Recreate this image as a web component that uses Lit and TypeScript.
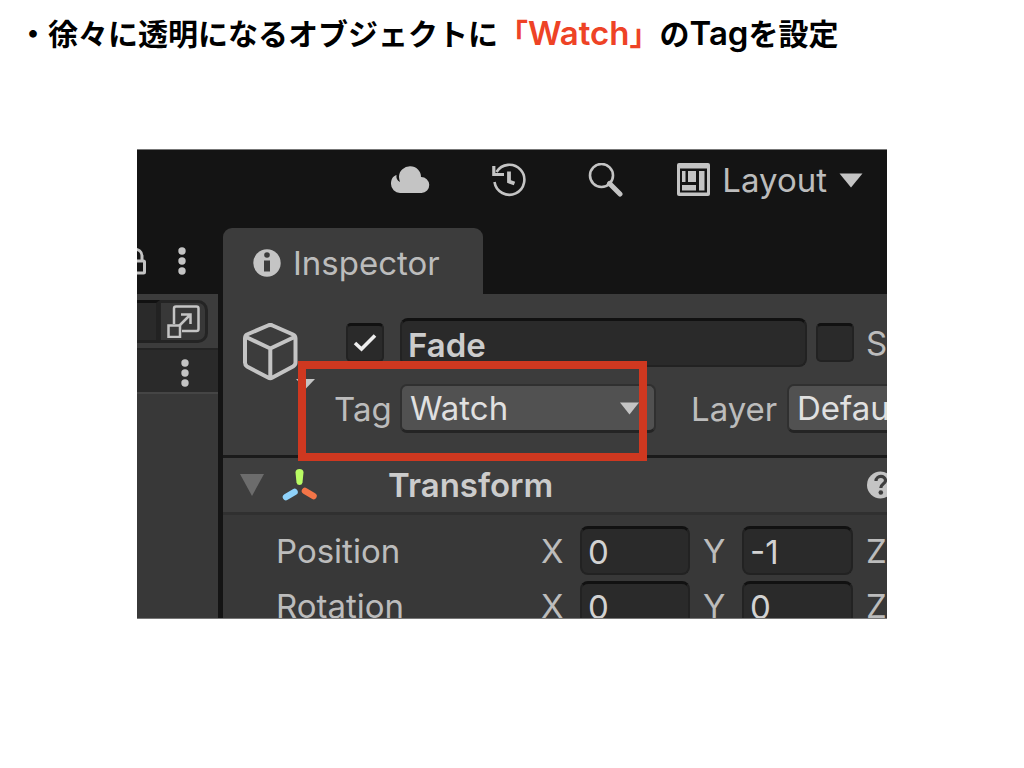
import { LitElement, html, css } from "lit";
import { customElement } from "lit/decorators.js";

const rows = [
  { label: "Position", x: "0", y: "-1", z: "0" },
  { label: "Rotation", x: "0", y: "0", z: "0" },
];

@customElement("unity-editor")
export class UnityEditor extends LitElement {
  static styles = css`
    :host {
      display: block;
      box-sizing: border-box;
      overflow: hidden;
      background: #141414;
      border-top: 1px solid #777;
      border-bottom: 1px solid #777;
      color: #bcbcbc;
      font: 33px/40px Inter, "Liberation Sans", sans-serif;
      font-optical-sizing: none;
    }
    * { box-sizing: border-box; font-optical-sizing: none; }
    svg { display: block; flex: none; }
    button {
      display: flex;
      align-items: center;
      padding: 0;
      border: 0;
      background: none;
      color: inherit;
      font: inherit;
      font-optical-sizing: none;
    }
    .toolbar {
      display: flex;
      justify-content: flex-end;
      align-items: center;
      height: 60px;
      margin-bottom: 18px;
      padding-right: 24px;
    }
    .toolbar button { margin-left: 62px; }
    .toolbar .layout { gap: 12px; margin-left: 54px; }
    .main {
      display: grid;
      grid-template-columns: 81px minmax(0, 1fr);
      column-gap: 5px;
    }
    .side {
      display: flex;
      flex-direction: column;
      overflow: hidden;
      background: #383838;
    }
    .side-tab {
      display: flex;
      justify-content: flex-end;
      align-items: center;
      gap: 32px;
      height: 66px;
      padding-right: 32px;
      background: #141414;
    }
    .side-search {
      display: flex;
      height: 56px;
      padding: 6px 10px 5px 0;
      background: #3c3c3c;
      border-bottom: 2px solid #242424;
    }
    .side-search input {
      width: 23px;
      border: 0;
      border-top: 3px solid #111;
      border-right: 4px solid #222;
      border-bottom: 3px solid #222;
      background: #2a2a2a;
    }
    .side-search button {
      flex: 1;
      justify-content: center;
      border: 3px solid #242424;
      border-left-width: 1px;
      border-radius: 0 10px 10px 0;
      background: #383838;
    }
    .side-row {
      display: flex;
      justify-content: flex-end;
      align-items: center;
      height: 44px;
      padding: 4px 29px 0 0;
      background: #2a2a2a;
      border-bottom: 2px solid #454545;
    }
    .inspector { overflow: hidden; }
    .tab {
      display: inline-flex;
      align-items: center;
      gap: 12px;
      height: 66px;
      width: 260px;
      padding: 4px 30px 0;
      border-radius: 9px 9px 0 0;
      background: #3c3c3c;
      vertical-align: top;
    }
    .header {
      position: relative;
      display: flex;
      gap: 18px;
      height: 164px;
      padding: 24px 0 0 20px;
      background: #3c3c3c;
      border-bottom: 3px solid #1a1a1a;
    }
    .cube { align-self: flex-start; margin-top: 5px; }
    .fields {
      display: flex;
      flex-direction: column;
      gap: 17px;
      min-width: 0;
    }
    .line { display: flex; align-items: center; height: 49px; }
    .line.name { padding-left: 12px; }
    .line label { flex: none; }
    .tag { width: 66px; }
    .layer { width: 96px; margin-left: 35px; }
    .static { margin-left: 12px; }
    .box {
      display: grid;
      flex: none;
      width: 38px;
      height: 39px;
    }
    .box > * { grid-area: 1 / 1; place-self: center; }
    .box svg { pointer-events: none; }
    .box input {
      appearance: none;
      width: 100%;
      height: 100%;
      margin: 0;
      border: 2px solid #222;
      border-top: 3px solid #111;
      border-radius: 5px;
      background: #2a2a2a;
    }
    .text {
      flex: none;
      min-width: 0;
      height: 49px;
      padding: 1px 6px 0;
      border: 2px solid #222;
      border-top: 3px solid #111;
      border-radius: 8px;
      background: #2a2a2a;
      color: #d2d2d2;
      font: inherit;
      font-optical-sizing: none;
    }
    .title {
      width: 407px;
      margin: 0 9px 0 16px;
      padding: 3px 6px 0;
      font-weight: 600;
      color: #ccc;
    }
    .pick { display: grid; flex: none; width: 256px; }
    .pick > * { grid-area: 1 / 1; }
    .pick svg { place-self: center end; margin-right: 17px; pointer-events: none; }
    select {
      appearance: none;
      height: 49px;
      padding: 0 8px;
      border: 2px solid #303030;
      border-bottom: 3px solid #242424;
      border-radius: 7px;
      background: #515151;
      color: #e0e0e0;
      font: inherit;
      font-optical-sizing: none;
    }
    .mark {
      position: absolute;
      left: 75px;
      top: 67px;
      width: 349px;
      height: 100px;
      border: 8px solid #cf3820;
      pointer-events: none;
    }
    .component {
      display: grid;
      grid-template-columns: 24px 36px 1fr 20px;
      align-items: center;
      height: 57px;
      padding-left: 17px;
      column-gap: 18px;
      background: #3e3e3e;
      border-bottom: 3px solid #303030;
    }
    .component h2 {
      margin: 0 0 0 52px;
      color: #ccc;
      font: inherit;
      font-optical-sizing: none;
      font-weight: 600;
    }
    .rows {
      display: flex;
      flex-direction: column;
      gap: 6px;
      height: 103px;
      padding: 11px 0 0 53px;
      overflow: hidden;
      background: #383838;
    }
    .vector {
      display: grid;
      grid-template-columns: 265px 39px 110px 52px 111px 52px 110px;
      align-items: center;
      flex: none;
      height: 49px;
    }
    .vector label { white-space: nowrap; }
    .vector .gap { padding-left: 13px; }
  `;

  private dots() {
    return html`<svg width="8" height="30" viewBox="0 0 8 30" fill="#c4c4c4" aria-hidden="true">
      <circle cx="4" cy="5" r="3.700" /><circle cx="4" cy="15" r="3.700" /><circle cx="4" cy="25" r="3.700" />
    </svg>`;
  }

  render() {
    return html`
      <div class="toolbar">
        <button aria-label="Cloud">
          <svg width="39" height="28" viewBox="0 0 39 28" fill="#c4c4c4">
            <path d="M9 27a9 9 0 0 1-9-9C0 13 2 10 5.500 9C5 12 6 14.500 9 16C8 13 8 11 8 10.500A11 10.500 0 0 1 30 11A8 8 0 0 1 30.500 27Z" />
          </svg>
        </button>
        <button aria-label="History">
          <svg width="34" height="34" viewBox="0 0 34 34" fill="none" stroke="#c4c4c4">
            <path d="M4.500 9A15 15 0 1 1 2.500 19" stroke-width="2.600" />
            <path d="M1.800 3V11.500H12" stroke-width="3.200" />
            <path d="M17 8.500V18.500L22.500 20.500" stroke-width="3.800" />
          </svg>
        </button>
        <button aria-label="Search">
          <svg width="35" height="34" viewBox="0 0 35 34" fill="none" stroke="#c4c4c4">
            <circle cx="13.500" cy="12.500" r="11.500" stroke-width="2.600" />
            <path d="M21.500 20.500L32 31" stroke-width="5" stroke-linecap="round" />
          </svg>
        </button>
        <button class="layout">
          <svg width="33" height="34" viewBox="0 0 33 34">
            <rect width="33" height="33" rx="2" fill="#c4c4c4" />
            <path d="M3 5.500H30V29.500H3Z" fill="#141414" />
            <path d="M5 8H8.500V19H5ZM11 8H19V19H11ZM22 8H27.500V27.500H22ZM5 22H19V27.500H5Z" fill="#c4c4c4" />
          </svg>
          <span>Layout</span>
          <svg width="24" height="15" viewBox="0 0 24 15"><path d="M.5 .5H23.500L12 14.500Z" fill="#c4c4c4" /></svg>
        </button>
      </div>
      <div class="main">
        <div class="side">
          <div class="side-tab">
            <svg width="24" height="28" viewBox="0 0 24 28" fill="none" stroke="#c4c4c4" stroke-width="3">
              <path d="M5 14V9C5 0 20 0 20 9V14" /><rect x="1.500" y="14" width="21" height="12" rx="1" />
            </svg>
            ${this.dots()}
          </div>
          <div class="side-search">
            <input aria-label="Filter" />
            <button aria-label="Open search">
              <svg width="33" height="33" viewBox="0 0 33 33" fill="none" stroke="#c4c4c4" stroke-width="2.500">
                <path d="M7 19V3.500Q7 1.500 9 1.500H29.500Q31.500 1.500 31.500 3.500V24Q31.500 26 29.500 26H15" />
                <path d="M1.500 20.500H13V32H1.500Z" />
                <path d="M12 21L23.500 9.500M14 9.500H23.500V19" />
              </svg>
            </button>
          </div>
          <div class="side-row">${this.dots()}</div>
        </div>
        <div class="inspector">
          <div class="tab">
            <svg width="28" height="28" viewBox="0 0 28 28">
              <circle cx="14" cy="14" r="13.700" fill="#c4c4c4" />
              <circle cx="14" cy="6" r="2.800" fill="#3c3c3c" /><path d="M11 11.500H17V22.500H11Z" fill="#3c3c3c" />
            </svg>
            <span>Inspector</span>
          </div>
          <div class="header">
            <button class="cube" aria-label="Object icon">
              <svg width="73" height="66" viewBox="0 0 73 66">
                <path d="M25 2.500Q27.300 1.300 29.500 2.500L50 11.500Q52.500 12.700 52.500 15.500V39.500Q52.500 42 50 43.500L29.500 54.500Q27.300 55.800 25 54.500L4 43.500Q2 42 2 39.500V15.500Q2 12.700 4 11.500ZM3 14L27.300 25.500L51.500 14M27.300 25.500V55" fill="none" stroke="#c4c4c4" stroke-width="4" stroke-linejoin="round" />
                <path d="M53 56H72L62.500 66Z" fill="#c4c4c4" />
              </svg>
            </button>
            <div class="fields">
              <div class="line name">
                <span class="box">
                  <input type="checkbox" checked aria-label="Active" />
                  <svg width="24" height="20" viewBox="0 0 24 20"><path d="M2 10L8.500 16L22 2.500" fill="none" stroke="#eee" stroke-width="3.600" /></svg>
                </span>
                <input class="text title" aria-label="Name" .value=${"Fade"} />
                <span class="box"><input type="checkbox" id="static" /></span>
                <label class="static" for="static">Static</label>
              </div>
              <div class="line">
                <label class="tag" for="tag">Tag</label>
                <span class="pick">
                  <select id="tag"><option>Watch</option></select>
                  <svg width="19" height="13" viewBox="0 0 19 13"><path d="M0 .5H19L9.500 12.500Z" fill="#c4c4c4" /></svg>
                </span>
                <label class="layer" for="layer">Layer</label>
                <span class="pick"><select id="layer"><option>Default</option></select></span>
              </div>
            </div>
            <div class="mark"></div>
          </div>
          <div class="component">
            <svg width="24" height="22" viewBox="0 0 24 22"><path d="M0 0H24L12 22Z" fill="#6c6c6c" /></svg>
            <svg width="36" height="33" viewBox="0 0 36 33">
              <path d="M13.500 3.500Q13.500 0 17.500 0Q21.500 0 21.500 3.500L20.500 13.500Q20 16 17.500 16Q15 16 14.500 13.500Z" fill="#b9fc64" />
              <path d="M4 28L12.500 23" stroke="#8fd2fa" stroke-width="6.500" stroke-linecap="round" />
              <path d="M23 22L31.500 27" stroke="#f37548" stroke-width="6.500" stroke-linecap="round" />
            </svg>
            <h2>Transform</h2>
            <svg width="27" height="28" viewBox="0 0 27 28">
              <circle cx="13.500" cy="14" r="13.500" fill="#c4c4c4" />
              <path d="M9 10C9 4 18.500 4 18.500 9.500C18.500 13 13.800 12.500 13.800 17" fill="none" stroke="#3e3e3e" stroke-width="3.200" />
              <circle cx="13.800" cy="21.500" r="2.300" fill="#3e3e3e" />
            </svg>
          </div>
          <div class="rows">
            ${rows.map(
              (r) => html`<div class="vector" role="group" aria-label=${r.label}>
                <span>${r.label}</span>
                <label for=${r.label + "x"}>X</label>
                <input class="text" id=${r.label + "x"} .value=${r.x} />
                <label class="gap" for=${r.label + "y"}>Y</label>
                <input class="text" id=${r.label + "y"} .value=${r.y} />
                <label class="gap" for=${r.label + "z"}>Z</label>
                <input class="text" id=${r.label + "z"} .value=${r.z} />
              </div>`
            )}
          </div>
        </div>
      </div>
    `;
  }
}

@customElement("app-root")
export class AppRoot extends LitElement {
  static styles = css`
    :host {
      display: block;
      min-height: 100vh;
      background: #fff;
    }
    h1 {
      margin: 0;
      padding: 12px 18px 0;
      color: #000;
      font: 700 30px/40px "Noto Sans CJK JP", sans-serif;
    }
    .latin {
      font: 600 33px/32px Inter, sans-serif;
      font-optical-sizing: none;
    }
    .accent { color: #ee4326; }
    unity-editor {
      max-width: 750px;
      margin: 97px auto 0;
    }
  `;

  render() {
    return html`
      <h1>・徐々に透明になるオブジェクトに<span class="accent">「<span class="latin">Watch</span>」</span>の<span class="latin">Tag</span>を設定</h1>
      <unity-editor></unity-editor>
    `;
  }
}
